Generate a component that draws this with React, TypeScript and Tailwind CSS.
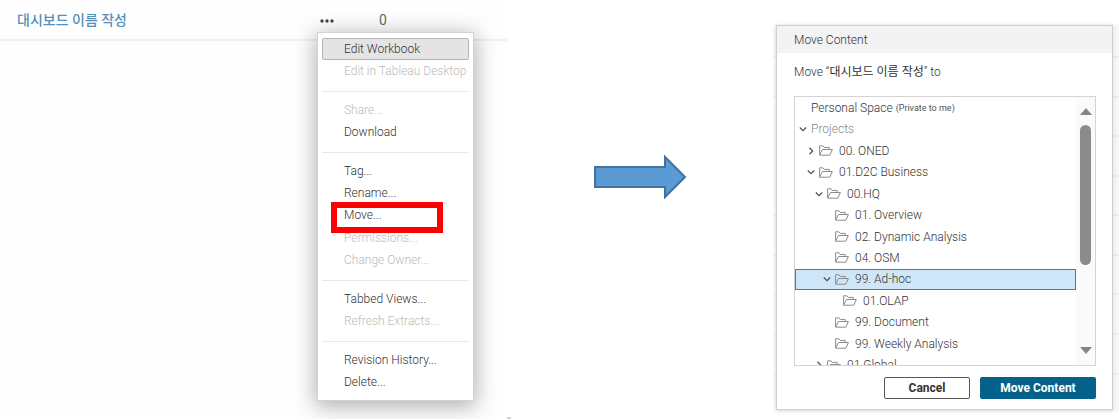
import React, { useState } from 'react';

type MenuEntry = { label: string; disabled?: boolean }
type TreeNode = { id: string; label: string; level: number; state?: 'open' | 'closed'; note?: string; plain?: boolean }

const menuGroups: MenuEntry[][] = [
  [{ label: 'Edit Workbook' }, { label: 'Edit in Tableau Desktop', disabled: true }],
  [{ label: 'Share...', disabled: true }, { label: 'Download' }],
  [
    { label: 'Tag...' },
    { label: 'Rename...' },
    { label: 'Move...' },
    { label: 'Permissions...', disabled: true },
    { label: 'Change Owner...', disabled: true },
  ],
  [{ label: 'Tabbed Views...' }, { label: 'Refresh Extracts...', disabled: true }],
  [{ label: 'Revision History...' }, { label: 'Delete...' }],
]

const projects: TreeNode[] = [
  { id: 'personal', label: 'Personal Space', level: 0, note: '(Private to me)', plain: true },
  { id: 'projects', label: 'Projects', level: 0, state: 'open', plain: true },
  { id: 'oned', label: '00. ONED', level: 1, state: 'closed' },
  { id: 'd2c', label: '01.D2C Business', level: 1, state: 'open' },
  { id: 'hq', label: '00.HQ', level: 2, state: 'open' },
  { id: 'overview', label: '01. Overview', level: 3 },
  { id: 'dynamic', label: '02. Dynamic Analysis', level: 3 },
  { id: 'osm', label: '04. OSM', level: 3 },
  { id: 'adhoc', label: '99. Ad-hoc', level: 3, state: 'open' },
  { id: 'olap', label: '01.OLAP', level: 4 },
  { id: 'document', label: '99. Document', level: 3 },
  { id: 'weekly', label: '99. Weekly Analysis', level: 3 },
  { id: 'global', label: '01.Global', level: 2, state: 'closed' },
]

const indents = ['pl-[3px]', 'pl-[11px]', 'pl-[19px]', 'pl-[27px]', 'pl-[35px]']

function FolderIcon() {
  return (
    <svg width="14" height="11" viewBox="0 0 14 11" fill="none" stroke="#8c8c8c" className="shrink-0">
      <path d="M.6 9.9V.8h3.3l1.3 1.6h5v2" />
      <path d="M.6 10.2 3.4 4.5h10L10.8 10.2z" strokeLinejoin="round" />
    </svg>
  )
}

function Caret({ state }: { state?: 'open' | 'closed' }) {
  return (
    <svg width="8" height="8" viewBox="0 0 8 8" fill="none" stroke="#555" strokeWidth="1.3" className="shrink-0">
      {state === 'open' && <path d="M.8 2.5 4 5.6l3.2-3.1" />}
      {state === 'closed' && <path d="M2.5.8 5.6 4 2.5 7.2" />}
    </svg>
  )
}

function ContextMenu() {
  return (
    <div role="menu" className="absolute left-0 top-full w-[157px] border border-[#d2d2d2] bg-white px-1 pb-1.5 pt-[5px] shadow-[0_4px_20px_2px_rgba(0,0,0,0.3)]">
      {menuGroups.map((group, g) => (
        <React.Fragment key={g}>
          {g > 0 && <hr className="mb-[7px] mt-2 border-t border-[#e8e8e8]" />}
          <div className={`grid auto-rows-fr ${group.length > 2 ? 'h-28' : 'h-[45px]'}`}>
            {group.map((item) => (
              <div key={item.label} className="relative flex">
                <button
                  role="menuitem"
                  disabled={item.disabled}
                  className={`w-full whitespace-nowrap rounded-xs border pl-[21px] text-left text-xs font-light leading-5 ${
                    item.label === 'Edit Workbook' ? 'border-[#b4b4b4] bg-[#e4e4e4]' : 'border-transparent'
                  } ${item.disabled ? 'text-[#bbb]' : 'text-[#333]'}`}
                >
                  {item.label}
                </button>
                {/* recuadro rojo sobre la opción Move */}
                {item.label === 'Move...' && (
                  <span className="pointer-events-none absolute -top-0.5 left-[9px] z-10 h-[31px] w-28 border-6 border-[#ff0000]" />
                )}
              </div>
            ))}
          </div>
        </React.Fragment>
      ))}
    </div>
  )
}

function WorkbookList() {
  return (
    <section className="w-[45.35%] shrink-0 bg-[#fefefe]">
      <div className="flex h-[41px] items-center border-b-2 border-[#f0f0f0]">
        <a href="#workbook" className="w-[300px] pl-[17px] text-sm font-medium leading-5 text-[#5590b8]">대시보드 이름 작성</a>
        <div className="relative ml-[17px] h-6 pl-[3px]">
          <button aria-label="More actions" className="flex h-full items-center">
            <svg width="14" height="6" viewBox="0 0 14 6" fill="#444">
              <circle cx="2" cy="4" r="1.7" />
              <circle cx="7" cy="4" r="1.7" />
              <circle cx="12" cy="4" r="1.7" />
            </svg>
          </button>
          <ContextMenu />
        </div>
        <span className="ml-[45px] text-sm leading-5 text-[#666]">0</span>
      </div>
    </section>
  )
}

function MoveDialog() {
  const [selected, setSelected] = useState('adhoc')

  return (
    <div role="dialog" aria-labelledby="dialog-title" className="border border-[#d0d0d0] bg-white shadow-[0_1px_5px_rgba(0,0,0,0.12)]">
      <h2 id="dialog-title" className="h-[27px] bg-[#f3f3f3] pl-[17px] text-xs font-light leading-7 text-[#333]">Move Content</h2>
      <div className="px-4 pb-2.5 pl-[17px]">
        <p className="py-[9px] text-xs font-light leading-5 text-[#333]">
          Move “<span className="font-normal">대시보드 이름 작성</span>” to
        </p>
        <div className="mt-[5px] flex h-[270px] overflow-hidden border border-[#d4d4d4]">
          <ul role="tree" className="grid h-[279px] min-w-0 flex-1 auto-rows-fr">
            {projects.map((node) => (
              <li key={node.id} role="treeitem" aria-selected={selected === node.id} className="flex">
                <button
                  onClick={() => setSelected(node.id)}
                  className={`flex w-full items-center border text-left text-xs font-light leading-5 ${indents[node.level]} ${
                    selected === node.id ? 'border-[#2f7fd0] bg-[#cfe6f8]' : 'border-transparent'
                  } ${node.id === 'projects' ? 'text-[#888]' : 'text-[#333]'}`}
                >
                  <Caret state={node.state} />
                  <span className={`ml-1 flex items-center whitespace-nowrap ${node.plain ? 'gap-[3px]' : 'gap-1.5'}`}>
                    {!node.plain && <FolderIcon />}
                    <span>{node.label}</span>
                    {node.note && <span className="text-[9px] font-normal text-[#555]">{node.note}</span>}
                  </span>
                </button>
              </li>
            ))}
          </ul>
          <div className="flex w-[19px] flex-col items-center bg-[#fafafa] py-[11px]">
            <svg width="12" height="7" viewBox="0 0 12 7" fill="#858585"><path d="M6 0l6 7H0z" /></svg>
            <div className="mt-2.5 h-[140px] w-[11px] rounded-full bg-[#8b8b8b]" />
            <svg width="12" height="7" viewBox="0 0 12 7" fill="#858585" className="mt-auto"><path d="M0 0h12L6 7z" /></svg>
          </div>
        </div>
        <div className="mt-[11px] flex justify-end gap-2.5">
          <button className="h-[22px] w-[86px] rounded-xs border border-[#555] bg-white text-xs font-bold leading-5 text-[#333]">Cancel</button>
          <button className="h-[22px] w-[116px] rounded-xs bg-[#04628a] text-xs font-bold leading-5 text-white">Move Content</button>
        </div>
      </div>
    </div>
  )
}

export default function App() {
  return (
    <main className="flex min-h-screen overflow-hidden bg-white font-['Roboto','Noto_Sans_CJK_KR',sans-serif]">
      <WorkbookList />
      <span className="h-0.5 w-1 self-end bg-[#d0d0d0]" />

      <div className="flex flex-1 items-start justify-end pr-[87px] pt-[154px]">
        <svg width="94" height="46" viewBox="0 0 94 46" fill="#5b9bd5" stroke="#41719c" strokeWidth="2">
          <path d="M2 13h70V3l20 20-20 20V33H2z" />
        </svg>
      </div>

      {/* filas de la lista detrás del diálogo */}
      <section className="mt-6 grid w-[345px] shrink-0 self-start bg-[#f8f8f8]">
        <div className="col-start-1 row-start-1 flex flex-col divide-y-2 divide-[#eee]">
          <div className="h-[34px]" />
          {Array.from({ length: 9 }, (_, i) => <div key={i} className="flex-1" />)}
        </div>
        <div className="z-10 col-start-1 row-start-1 mb-0.5 ml-0.5 mr-1.5 mt-px">
          <MoveDialog />
        </div>
      </section>
    </main>
  )
}
